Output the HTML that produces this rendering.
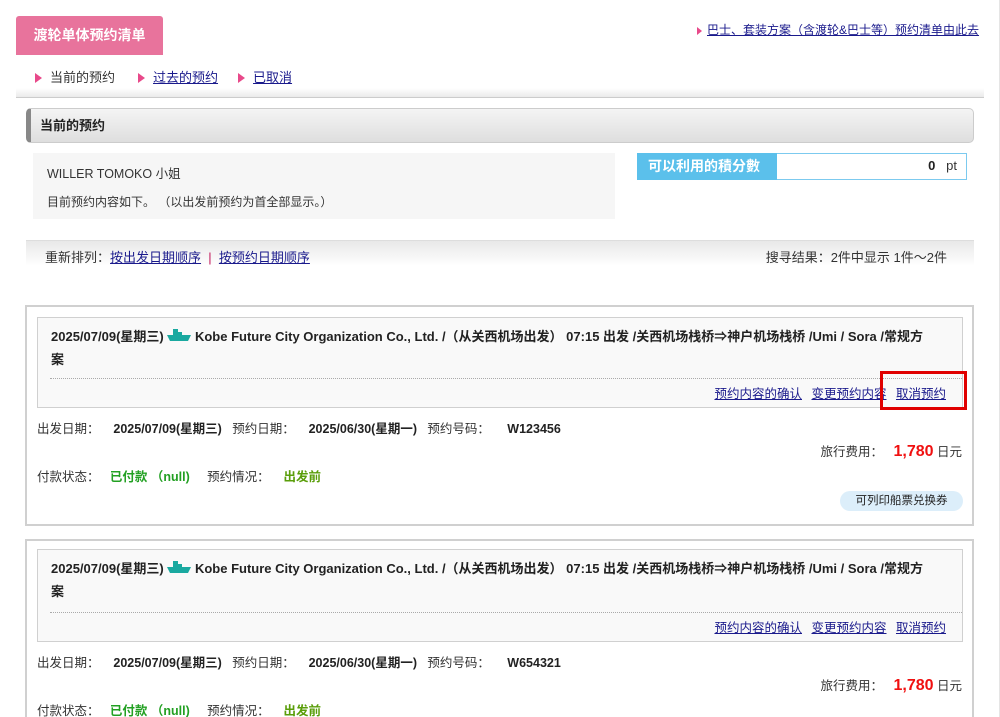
<!DOCTYPE html>
<html style="overflow:hidden"><head><meta charset="utf-8"><style>
*{margin:0;padding:0;box-sizing:border-box}
html,body{width:1000px;height:717px;overflow:hidden}
body{background:#fff;font-family:"Liberation Sans","Noto Sans CJK SC",sans-serif;font-size:12px;color:#333;position:relative}
.a{position:absolute;white-space:nowrap}
a{color:#1a1a8c;text-decoration:underline}
.tri{display:inline-block;width:0;height:0;border-left:7px solid #e8498a;border-top:5px solid transparent;border-bottom:5px solid transparent;margin-right:8px;vertical-align:-1px}
b{font-weight:bold;color:#222}
.card{position:absolute;left:25px;width:949px;border:2px solid #d0d0d0;background:#fff}
.inner{position:absolute;left:10px;width:926px;border:1px solid #d0d0d0;background:#f9f9f9}
.ttl{position:absolute;left:13px;top:7px;width:910px;font-weight:bold;font-size:13px;line-height:23px;color:#222;white-space:nowrap}
.dot{position:absolute;left:12px;right:0;border-top:1px dotted #aaa}
.lnk{position:absolute;right:16px;font-size:12.5px}
.lnk a{margin-left:6px}
.g{color:#22a022;font-weight:bold}
.row{font-size:12.5px}
</style></head><body>
<div style="position:absolute;right:0;top:0;width:1px;height:717px;background:#e5e5e5"></div>
<div class="a" style="left:16px;top:16px;width:147px;height:39px;background:#e8739c;border-radius:3px 3px 0 0;color:#fff;font-weight:bold;font-size:14px;line-height:39px;text-align:center">渡轮单体预约清单</div>
<div class="a" style="left:697px;top:21px;font-size:12px"><span class="tri" style="border-left-width:5px;border-top-width:4px;border-bottom-width:4px;margin-right:5px"></span><a href="#">巴士、套装方案（含渡轮&amp;巴士等）预约清单由此去</a></div>
<div class="a" style="left:35px;top:67px;font-size:13px"><span class="tri"></span>当前的预约<span class="tri" style="margin-left:23px"></span><a href="#">过去的预约</a><span class="tri" style="margin-left:20px"></span><a href="#">已取消</a></div>
<div class="a" style="left:16px;top:88px;width:968px;height:10px;background:linear-gradient(#fff,#eaeaea);border-bottom:1px solid #ccc"></div>
<div class="a" style="left:26px;top:108px;width:948px;height:35px;border:1px solid #ccc;border-left:5px solid #888;border-radius:5px;background:linear-gradient(#f4f4f4,#dedede);font-weight:bold;font-size:13px;line-height:33px;padding-left:9px;color:#222">当前的预约</div>
<div class="a" style="left:33px;top:153px;width:582px;height:66px;background:#f6f6f6"></div>
<div class="a" style="left:47px;top:163px;font-size:12.5px">WILLER TOMOKO 小姐</div>
<div class="a" style="left:47px;top:193px;font-size:12px">目前预约内容如下。 （以出发前预约为首全部显示。）</div>
<div class="a" style="left:637px;top:153px;width:330px;height:27px;border:1px solid #7ccaef;background:#fff"></div>
<div class="a" style="left:637px;top:153px;width:140px;height:27px;background:#5bc0eb;color:#fff;font-weight:bold;font-size:14px;line-height:27px;padding-left:11px">可以利用的積分數</div>
<div class="a" style="left:900px;top:158px;width:57px;text-align:right;font-size:13px"><b>0</b>&nbsp;&nbsp; pt</div>
<div class="a" style="left:26px;top:240px;width:948px;height:26px;background:linear-gradient(#e8e8e8,#fff);border-top:1px solid #ddd"></div>
<div class="a" style="left:45px;top:247px;font-size:13px">重新排列：<a href="#">按出发日期顺序</a>&nbsp;&nbsp;<span style="color:#c2185b">|</span>&nbsp;&nbsp;<a href="#">按预约日期顺序</a></div>
<div class="a" style="right:53px;top:247px;font-size:13px">搜寻结果：2件中显示 1件～2件</div>

<div class="card" style="top:305px;height:221px">
 <div class="inner" style="top:10px;height:91px">
  <div class="ttl">2025/07/09(星期三) <svg width="24" height="14" viewBox="0 0 24 14" style="vertical-align:-1px"><path fill="#1aa9a0" d="M6 1h5v3h4v3h9l-3 6H3L0 7h6z"/></svg> Kobe Future City Organization Co., Ltd. /（从关西机场出发） 07:15 出发 /关西机场栈桥⇒神户机场栈桥 /Umi / Sora /常规方<br>案</div>
  <div class="dot" style="top:60px"></div>
  <div class="lnk" style="top:65px"><a href="#">预约内容的确认</a> <a href="#">变更预约内容</a> <a href="#">取消预约</a></div>
 </div>
 <div class="a row" style="left:10px;top:111px">出发日期：&nbsp;&nbsp;&nbsp; <b>2025/07/09(星期三)</b>&nbsp;&nbsp; 预约日期：&nbsp;&nbsp;&nbsp; <b>2025/06/30(星期一)</b>&nbsp;&nbsp; 预约号码：&nbsp;&nbsp;&nbsp;&nbsp; <b>W123456</b></div>
 <div class="a row" style="right:10px;top:134px">旅行费用：&nbsp;&nbsp; <span style="color:#f01010;font-weight:bold;font-size:16px">1,780</span> 日元</div>
 <div class="a row" style="left:10px;top:159px">付款状态：&nbsp;&nbsp; <span class="g">已付款 （null)</span>&nbsp;&nbsp;&nbsp;&nbsp; 预约情况：&nbsp;&nbsp;&nbsp; <span class="g" style="color:#5a9e0a">出发前</span></div>
 <div class="a" style="left:813px;top:184px;width:123px;height:20px;border-radius:10px;background:#dceefa;font-size:11.5px;line-height:20px;text-align:center;color:#222">可列印船票兑换券</div>
</div>
<div class="a" style="left:880px;top:371px;width:87px;height:39px;border:3px solid #e00000"></div>

<div class="card" style="top:539px;height:200px">
 <div class="inner" style="top:8px;height:93px">
  <div class="ttl">2025/07/09(星期三) <svg width="24" height="14" viewBox="0 0 24 14" style="vertical-align:-1px"><path fill="#1aa9a0" d="M6 1h5v3h4v3h9l-3 6H3L0 7h6z"/></svg> Kobe Future City Organization Co., Ltd. /（从关西机场出发） 07:15 出发 /关西机场栈桥⇒神户机场栈桥 /Umi / Sora /常规方<br>案</div>
  <div class="dot" style="top:62px"></div>
  <div class="lnk" style="top:67px"><a href="#">预约内容的确认</a> <a href="#">变更预约内容</a> <a href="#">取消预约</a></div>
 </div>
 <div class="a row" style="left:10px;top:111px">出发日期：&nbsp;&nbsp;&nbsp; <b>2025/07/09(星期三)</b>&nbsp;&nbsp; 预约日期：&nbsp;&nbsp;&nbsp; <b>2025/06/30(星期一)</b>&nbsp;&nbsp; 预约号码：&nbsp;&nbsp;&nbsp;&nbsp; <b>W654321</b></div>
 <div class="a row" style="right:10px;top:134px">旅行费用：&nbsp;&nbsp; <span style="color:#f01010;font-weight:bold;font-size:16px">1,780</span> 日元</div>
 <div class="a row" style="left:10px;top:159px">付款状态：&nbsp;&nbsp; <span class="g">已付款 （null)</span>&nbsp;&nbsp;&nbsp;&nbsp; 预约情况：&nbsp;&nbsp;&nbsp; <span class="g" style="color:#5a9e0a">出发前</span></div>
</div>
</body></html>
